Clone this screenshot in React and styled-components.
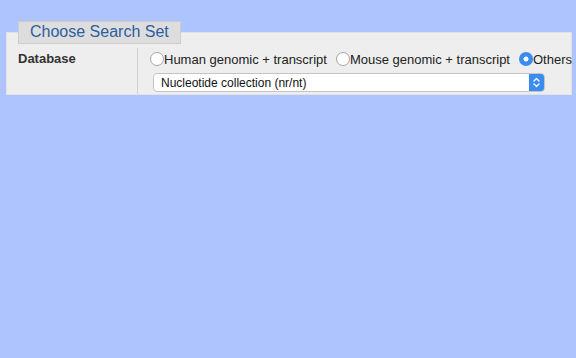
import React, { useState } from "react";
import styled, { createGlobalStyle } from "styled-components";

const GlobalStyle = createGlobalStyle`
  html, body {
    margin: 0;
    padding: 0;
    background: #aec4ff;
    font-family: "Liberation Sans", Arial, Helvetica, sans-serif;
    color: #222;
  }
`;

const Page = styled.div`
  padding: 21px 4px 0 6px;
`;

const Fieldset = styled.fieldset`
  margin: 0;
  padding: 4px 0 0 0;
  min-width: 0;
  background: #eeeeee;
  border: 1px solid #e2e2e2;
`;

const Legend = styled.legend`
  margin-left: 11px;
  padding: 2px 11px 3px 11px;
  background: #dddddd;
  border: 1px solid #cdcdcd;
  color: #2b5f9e;
  font-size: 16px;
  line-height: 16px;
`;

const Row = styled.div`
  display: flex;
  align-items: stretch;
`;

const Label = styled.div`
  width: 119px;
  flex: none;
  padding: 3px 0 0 11px;
  border-right: 1px solid #d0d0d0;
  font-weight: bold;
  font-size: 13px;
  color: #333;
`;

const Fields = styled.div`
  flex: 1;
  min-width: 0;
  padding: 3px 0 2px 12px;
  display: flex;
  flex-direction: column;
  gap: 6px;
`;

const Radios = styled.div`
  display: flex;
  align-items: center;
  white-space: nowrap;
  font-size: 13px;
  height: 16px;
`;

const RadioLabel = styled.label`
  display: inline-flex;
  align-items: center;
  margin-right: 9px;
  &:last-child {
    margin-right: 0;
  }
`;

const Radio = styled.input.attrs({ type: "radio" })`
  appearance: none;
  margin: 0;
  width: 14px;
  height: 14px;
  border-radius: 50%;
  border: 1px solid #a6a6a6;
  background: #fff;
  box-sizing: border-box;
  &:checked {
    border: none;
    background: radial-gradient(circle, #fff 0 2.2px, #3b8cf2 2.8px);
  }
`;

const SelectBox = styled.div`
  display: flex;
  width: 392px;
  height: 19px;
  margin-left: 3px;
  border: 1px solid #c4c4c4;
  border-radius: 4px;
  background: #fff;
  overflow: hidden;
  box-sizing: border-box;
`;

const Select = styled.select`
  appearance: none;
  flex: 1;
  border: none;
  background: transparent;
  font-family: inherit;
  font-size: 12px;
  color: #111;
  padding: 0 0 0 7px;
  outline: none;
`;

const Arrow = styled.span`
  width: 15px;
  flex: none;
  background: #3b8cf2;
  display: flex;
  align-items: center;
  justify-content: center;
`;

export default function App() {
  const [choice, setChoice] = useState("others");

  return (
    <>
      <GlobalStyle />
      <Page>
        <Fieldset>
          <Legend>Choose Search Set</Legend>
          <Row>
            <Label>Database</Label>
            <Fields>
              <Radios>
                <RadioLabel>
                  <Radio name="db" checked={choice === "human"} onChange={() => setChoice("human")} />
                  Human genomic + transcript
                </RadioLabel>
                <RadioLabel>
                  <Radio name="db" checked={choice === "mouse"} onChange={() => setChoice("mouse")} />
                  Mouse genomic + transcript
                </RadioLabel>
                <RadioLabel>
                  <Radio name="db" checked={choice === "others"} onChange={() => setChoice("others")} />
                  Others
                </RadioLabel>
              </Radios>
              <SelectBox>
                <Select defaultValue="nt">
                  <option value="nt">Nucleotide collection (nr/nt)</option>
                </Select>
                <Arrow>
                  <svg width="9" height="13" viewBox="0 0 9 13" fill="none" stroke="#fff" strokeWidth="1.4" strokeLinecap="round" strokeLinejoin="round">
                    <path d="M2 5 L4.5 2.5 L7 5" />
                    <path d="M2 8 L4.5 10.5 L7 8" />
                  </svg>
                </Arrow>
              </SelectBox>
            </Fields>
          </Row>
        </Fieldset>
      </Page>
    </>
  );
}
